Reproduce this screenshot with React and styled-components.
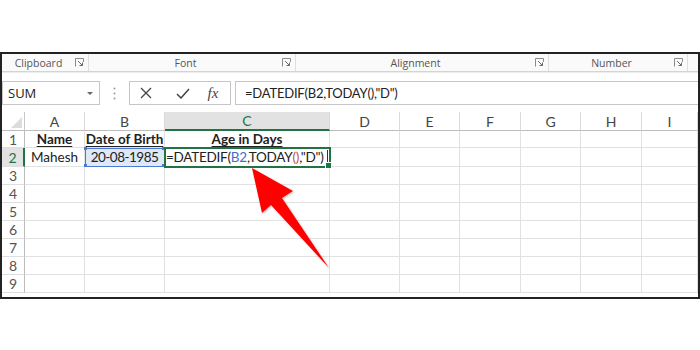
import React from "react";
import styled, { createGlobalStyle } from "styled-components";

const GlobalStyle = createGlobalStyle`
  html, body { margin: 0; padding: 0; background: #fff; }
  body { font-family: "Open Sans", "Noto Sans", sans-serif; }
  * { box-sizing: border-box; }
`;

const Page = styled.div`
  position: relative;
  width: 700px;
  height: 350px;
  padding-top: 52px;
  overflow: hidden;
  background: #fff;
`;

const Frame = styled.div`
  width: 700px;
  height: 247px;
  border: 2px solid #222;
  background: #fff;
  overflow: hidden;
  display: flex;
  flex-direction: column;
`;

const Ribbon = styled.div`
  display: grid;
  grid-template-columns: 87px 207px 253px 139px 1fr;
  height: 18px;
  background: #fafafa;
  border-bottom: 1px solid #d4d4d4;
  box-shadow: 0 1px 0 #ececec;
`;

const Group = styled.div`
  display: flex;
  align-items: center;
  padding-right: 4px;
  border-right: ${(p) => (p.$last ? "none" : "1px solid #dedede")};
`;

const GroupLabel = styled.span`
  flex: 1;
  text-align: center;
  font-family: "Open Sans", sans-serif;
  font-size: 10.5px;
  color: #555;
`;

const LauncherIcon = () => (
  <svg width="9" height="9" viewBox="0 0 9 9">
    <path d="M0.5 8.5 V0.5 H8.5 V4" fill="none" stroke="#8a8a8a" strokeWidth="1" />
    <path d="M3 3 L7.5 7.5 M4.5 7.5 H7.5 V4.5" fill="none" stroke="#6a6a6a" strokeWidth="1" />
  </svg>
);

const FormulaRow = styled.div`
  display: flex;
  height: 24px;
  margin: 9px 0 7px 0;
`;

const NameBox = styled.div`
  width: 98px;
  display: flex;
  align-items: center;
  justify-content: space-between;
  padding: 0 6px 0 5px;
  border: 1px solid #c6c6c6;
  background: #fff;
  font-family: "Open Sans", sans-serif;
  font-size: 13px;
  color: #222;
`;

const Caret = styled.span`
  width: 0;
  height: 0;
  border-left: 3px solid transparent;
  border-right: 3px solid transparent;
  border-top: 3px solid #666;
`;

const Grip = styled.div`
  width: 29px;
  display: flex;
  align-items: center;
  justify-content: center;
`;

const ButtonBox = styled.div`
  width: 102px;
  display: grid;
  grid-template-columns: 32px 42px 18px;
  align-items: center;
  justify-items: center;
  border: 1px solid #c6c6c6;
  background: #fff;
`;

const Fx = styled.span`
  font-family: "Liberation Serif", serif;
  font-style: italic;
  font-size: 15px;
  color: #444;
  line-height: 1;
`;

const FormulaBox = styled.div`
  flex: 1;
  margin-left: 4px;
  display: flex;
  align-items: center;
  padding-left: 9px;
  border: 1px solid #c6c6c6;
  border-right: none;
  background: #fff;
  font-family: "Lato", sans-serif;
  font-size: 13px;
  letter-spacing: -0.2px;
  color: #222;
`;

const Sheet = styled.div`
  display: grid;
  grid-template-columns: 23px 60px 80px 165px 70px 60px 61px 60px 61px 1fr;
  grid-template-rows: 19px 17px 19px;
  grid-auto-rows: 18px;
  font-family: "Lato", sans-serif;
`;

const Corner = styled.div`
  position: relative;
  background: #fff;
  border-right: 1px solid #c8c8c8;
  border-bottom: 1px solid #bdbdbd;
  &::after {
    content: "";
    position: absolute;
    right: 2px;
    bottom: 2px;
    width: 0;
    height: 0;
    border-left: 11px solid transparent;
    border-bottom: 11px solid #dcdcdc;
  }
`;

const ColHead = styled.div`
  display: flex;
  align-items: center;
  justify-content: center;
  font-size: 14px;
  color: ${(p) => (p.$active ? "#217346" : "#444")};
  background: ${(p) => (p.$active ? "#e2e2e2" : "#fff")};
  border-right: 1px solid #dadada;
  border-bottom: ${(p) => (p.$active ? "2px solid #217346" : "1px solid #bdbdbd")};
`;

const RowHead = styled.div`
  display: flex;
  align-items: center;
  justify-content: center;
  font-size: 14px;
  color: ${(p) => (p.$active ? "#217346" : "#555")};
  background: ${(p) => (p.$active ? "#e2e2e2" : "#fff")};
  border-bottom: 1px solid #dedede;
  border-right: ${(p) => (p.$active ? "2px solid #217346" : "1px solid #bdbdbd")};
`;

const Cell = styled.div`
  position: relative;
  display: flex;
  align-items: center;
  justify-content: ${(p) => (p.$left ? "flex-start" : "center")};
  padding: ${(p) => (p.$left ? "0 0 0 1px" : "0")};
  font-size: 13.5px;
  letter-spacing: ${(p) => (p.$tight ? "-0.5px" : p.$left ? "-0.25px" : "0")};
  font-weight: ${(p) => (p.$bold ? 700 : 400)};
  text-decoration: ${(p) => (p.$bold ? "underline" : "none")};
  text-underline-offset: 2px;
  color: #222;
  white-space: nowrap;
  background: ${(p) => (p.$sel === "ref" ? "#dfe8f7" : "#fff")};
  border-right: 1px solid #e1e1e1;
  border-bottom: 1px solid #e1e1e1;
  ${(p) =>
    p.$sel === "ref" &&
    `
    outline: 1px solid #4a78d4;
    outline-offset: -1px;
    &::before, &::after {
      content: "";
      position: absolute;
      width: 3px;
      height: 3px;
      background: #4a78d4;
    }
    &::before { left: -1px; top: -1px; box-shadow: 78px 0 0 #4a78d4; }
    &::after { left: -1px; bottom: -1px; box-shadow: 78px 0 0 #4a78d4; }
  `}
  ${(p) =>
    p.$sel === "active" &&
    `
    outline: 2px solid #217346;
    outline-offset: -1px;
    z-index: 1;
    &::after {
      content: "";
      position: absolute;
      right: -3px;
      bottom: -3px;
      width: 5px;
      height: 5px;
      background: #217346;
      border: 1px solid #fff;
    }
  `}
`;

const Ref = styled.span`
  color: #3f6fd1;
`;
const Paren = styled.span`
  color: #c0504d;
`;
const Cursor = styled.span`
  display: inline-block;
  width: 1px;
  height: 14px;
  margin-left: 3px;
  background: #333;
  vertical-align: middle;
`;

const ArrowLayer = styled.svg`
  position: absolute;
  left: 0;
  top: 0;
  pointer-events: none;
`;

const groups = [
  { label: "Clipboard" },
  { label: "Font" },
  { label: "Alignment" },
  { label: "Number" },
];

const cols = ["A", "B", "C", "D", "E", "F", "G", "H", "I"];

const data = {
  1: [
    { text: "Name", bold: true },
    { text: "Date of Birth", bold: true },
    { text: "Age in Days", bold: true },
  ],
  2: [
    { text: "Mahesh" },
    { text: "20-08-1985", sel: "ref", tight: true },
    {
      text: (
        <>
          =DATEDIF(<Ref>B2</Ref>,TODAY<Paren>()</Paren>,"D")
          <Cursor />
        </>
      ),
      sel: "active",
      left: true,
    },
  ],
};

export default function App() {
  const rows = [];
  for (let r = 1; r <= 9; r++) {
    rows.push(
      <RowHead key={`rh${r}`} $active={r === 2}>
        {r}
      </RowHead>
    );
    cols.forEach((c, i) => {
      const d = (data[r] || [])[i];
      rows.push(
        <Cell
          key={`${c}${r}`}
          $bold={d && d.bold}
          $sel={d && d.sel}
          $left={d && d.left}
          $tight={d && d.tight}
        >
          {d ? d.text : null}
        </Cell>
      );
    });
  }

  return (
    <Page>
      <GlobalStyle />
      <Frame>
        <Ribbon>
          {groups.map((g) => (
            <Group key={g.label}>
              <GroupLabel>{g.label}</GroupLabel>
              <LauncherIcon />
            </Group>
          ))}
          <Group $last />
        </Ribbon>
        <FormulaRow>
          <NameBox>
            SUM
            <Caret />
          </NameBox>
          <Grip>
            <svg width="3" height="13" viewBox="0 0 3 13">
              <circle cx="1.5" cy="1.5" r="1" fill="#999" />
              <circle cx="1.5" cy="6.5" r="1" fill="#999" />
              <circle cx="1.5" cy="11.5" r="1" fill="#999" />
            </svg>
          </Grip>
          <ButtonBox>
            <svg width="12" height="12" viewBox="0 0 12 12">
              <path d="M1 1 L11 11 M11 1 L1 11" stroke="#444" strokeWidth="1.3" />
            </svg>
            <svg width="14" height="11" viewBox="0 0 14 11">
              <path d="M1 6 L5 10 L13 1" fill="none" stroke="#444" strokeWidth="1.5" />
            </svg>
            <Fx>fx</Fx>
          </ButtonBox>
          <FormulaBox>=DATEDIF(B2,TODAY(),"D")</FormulaBox>
        </FormulaRow>
        <Sheet>
          <Corner />
          {cols.map((c) => (
            <ColHead key={c} $active={c === "C"}>
              {c}
            </ColHead>
          ))}
          {rows}
        </Sheet>
      </Frame>
      <ArrowLayer width="700" height="350" viewBox="0 0 700 350">
        <defs>
          <filter id="sh" x="-20%" y="-20%" width="140%" height="140%">
            <feDropShadow dx="1" dy="1" stdDeviation="1" floodColor="#000" floodOpacity="0.25" />
          </filter>
        </defs>
        <polygon
          points="252,168 293,191 282,198 329,268 271,205 262,213"
          fill="#ff0000"
          filter="url(#sh)"
        />
      </ArrowLayer>
    </Page>
  );
}
